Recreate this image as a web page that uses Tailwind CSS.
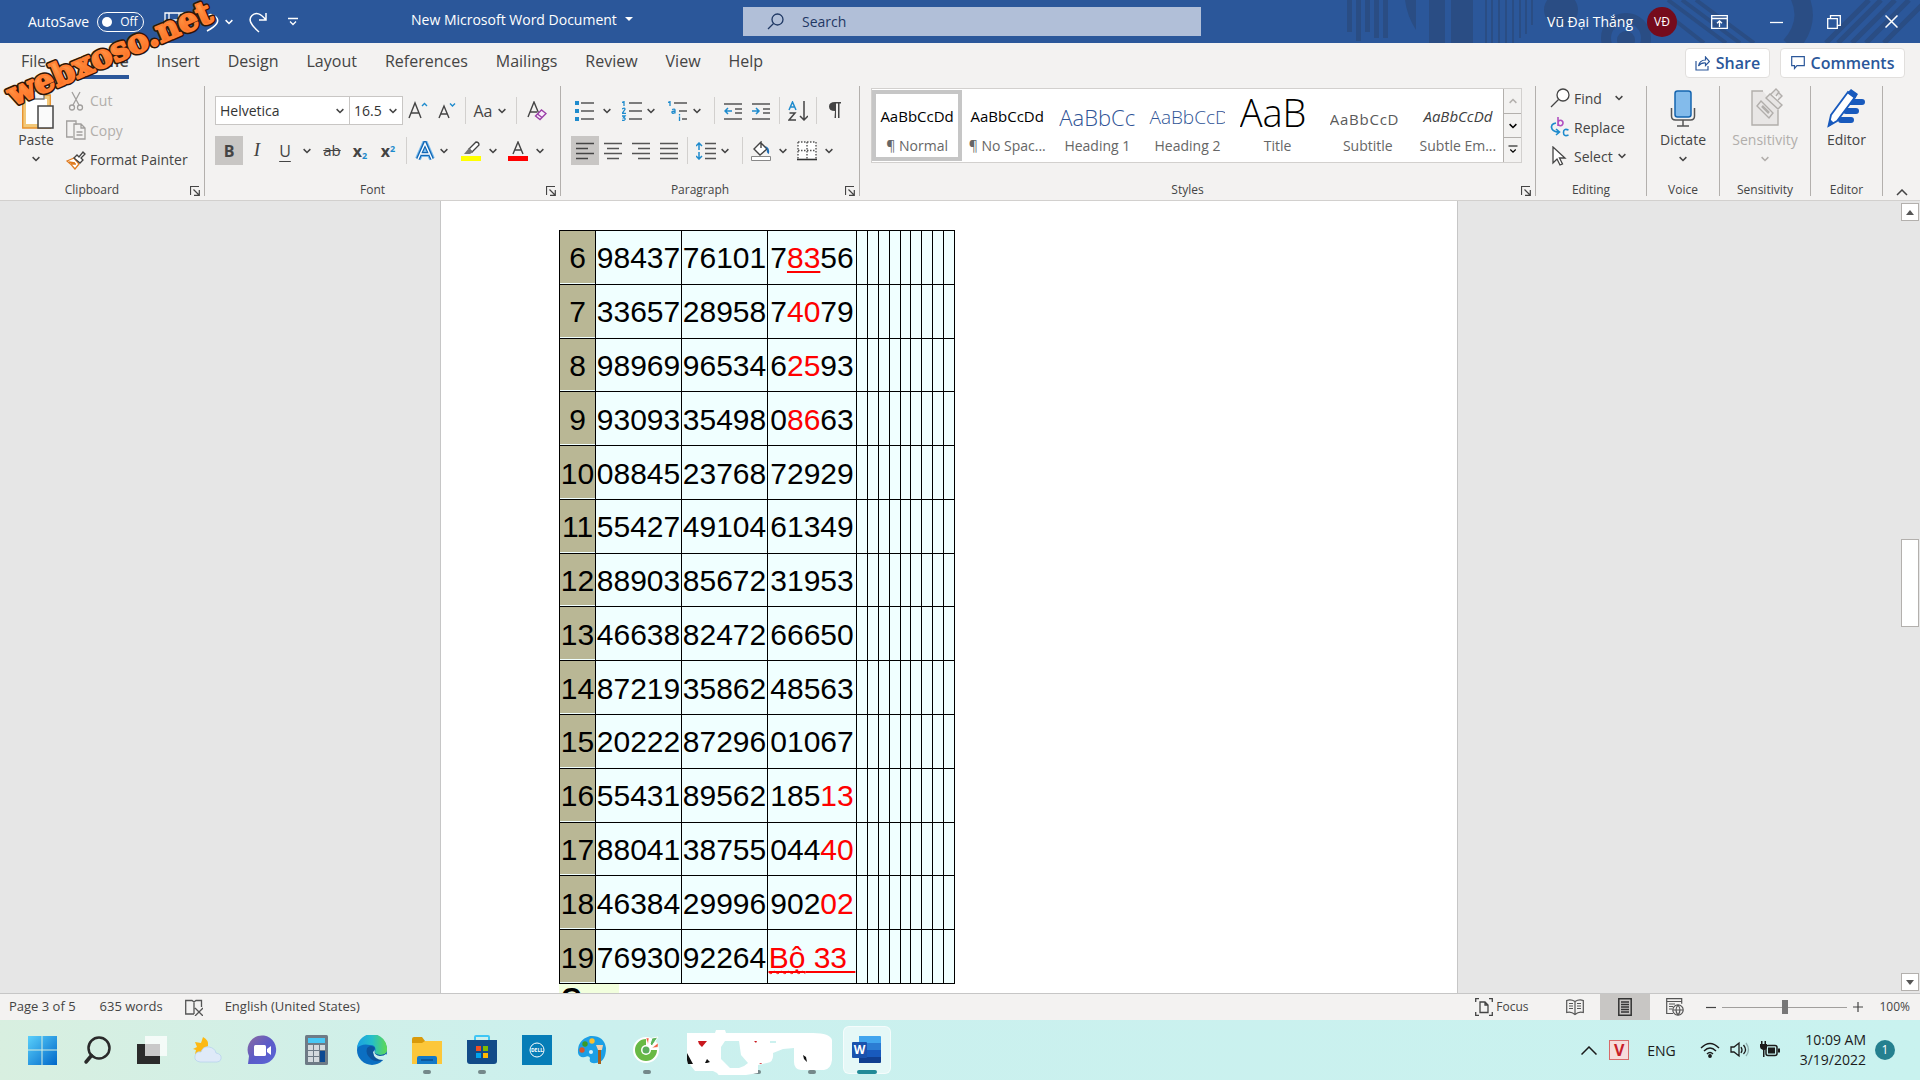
<!DOCTYPE html>
<html lang="en">
<head>
    <meta charset="UTF-8">
    <meta name="viewport" content="width=device-width, initial-scale=1.0">
    <title>New Microsoft Word Document</title>
    <script src="https://cdn.jsdelivr.net/npm/@tailwindcss/browser@4"></script>
</head>
<body class="h-screen flex flex-col overflow-hidden bg-[#f3f2f1] text-[#444444] font-['Open_Sans','Noto_Sans',sans-serif]">

    <!-- shared symbols -->
    <svg class="hidden">
        <symbol id="chev" viewBox="0 0 8 8"><path d="M1.300 2.500L4 5.200l2.700-2.700" fill="none" stroke="currentColor" stroke-width="1.200"/></symbol>
        <symbol id="launch" viewBox="0 0 10 10"><path d="M.5 9V.5H9M3.500 3.500l5 5M9.300 4v5.300H4" fill="none" stroke="currentColor" stroke-width="1.200"/></symbol>
    </svg>

    <!-- title bar -->
    <header class="relative flex items-center h-[43px] bg-[#2b579a] text-white text-[14px]">
        <svg class="absolute right-0 top-0" width="620" height="43" viewBox="1300 0 620 43" fill="#2a4d84" stroke="#2a4d84" stroke-width="0">
            <path d="M1347 0h5v32h-5zM1356 0h5v41h-5zM1365 0h5v32h-5zM1374 0h5v38h-5zM1383 0h5v38h-5zM1405 0h11v30q-9-14-11-30zM1429 0h16v43h-16zM1451 0h22v43h-22zM1485 0h2v43h-2zM1491 0h2v43h-2zM1498 0h2v43h-2zM1505 0h2v43h-2zM1512 0h2v43h-2zM1519 0h2v38h-2zM1525 0h2v34h-2zM1531 0h2v25h-2z"/>
            <circle cx="1561" cy="10" r="17"/>
            <circle cx="1626" cy="38" r="20" fill="none" stroke-width="10"/>
            <circle cx="1626" cy="40" r="9"/>
            <path d="M1668 0l58 43M1682 0l58 43M1696 0l58 43M1672 18l32 25" stroke-width="4" fill="none"/>
            <path d="M1796-10q18 30-6 56" stroke-width="18" fill="none"/>
            <path d="M1826 43l43-43M1838 43l43-43M1852 43l43-43M1866 43l43-43M1884 43l43-43" stroke-width="5" fill="none"/>
        </svg>
        <label class="relative flex items-center gap-2 pl-7 w-[164px]">
            <span>AutoSave</span>
            <input type="checkbox" class="sr-only">
            <span class="flex items-center gap-2 h-5 w-[47px] rounded-full border border-white pl-1 text-[12px]"><i class="size-[10px] rounded-full bg-white"></i>Off</span>
        </label>
        <div class="relative flex items-center">
            <button aria-label="Save" class="w-9"><svg width="20" height="20" fill="none" stroke="white" stroke-width="1.300"><path d="M1 1h18v18H4l-3-3zM5 1v7h10V1M6 19v-6h8v6"/></svg></button>
            <button aria-label="Undo" class="w-6"><svg width="20" height="20" fill="none" stroke="white" stroke-width="1.500"><path d="M2 1v7h7M2 8q8-9 14-3t-9 14"/></svg></button>
            <button aria-label="Undo list" class="w-6"><svg class="size-[10px]"><use href="#chev"/></svg></button>
            <button aria-label="Redo" class="w-9"><svg width="20" height="22" fill="none" stroke="white" stroke-width="1.500"><path d="M18 2v7h-7M18 9Q10-1 4 4.500T11 21"/></svg></button>
            <button aria-label="Customize Quick Access Toolbar" class="w-8 pl-1"><svg width="10" height="10" fill="none" stroke="white" stroke-width="1.300"><path d="M0 1.500h10M2 4.500l3 3 3-3"/></svg></button>
        </div>
        <button class="relative flex items-center gap-2 ml-[95px] mb-1"><span>New Microsoft Word Document</span><svg width="8" height="5" fill="white"><path d="M0 0h8l-4 4z"/></svg></button>
        <label class="absolute left-[743px] top-[7px] flex items-center w-[458px] h-[29px] bg-[#b1bfd8] text-[#1f3864] pl-6 gap-[18px]">
            <svg width="17" height="17" fill="none" stroke="#1f3864" stroke-width="1.300"><circle cx="10.500" cy="6.500" r="5.500"/><path d="M6.500 10.500L1 16"/></svg>
            <input type="text" aria-label="Search" placeholder="Search" class="flex-1 bg-transparent outline-none placeholder:text-[#1f3864]">
        </label>
        <div class="relative ml-auto flex items-center">
            <span class="mr-[14px]">Vũ Đại Thắng</span>
            <span class="size-[30px] rounded-full bg-[#750b1c] text-[12px] flex items-center justify-center">VĐ</span>
            <button aria-label="Ribbon display" class="ml-[34px] w-[17px]"><svg width="17" height="14" fill="none" stroke="white" stroke-width="1.300"><path d="M.7.700h15.600v12.600H.7zM.7 3.500h15.600M8.500 12V6M6 8.300L8.500 6 11 8.300"/></svg></button>
            <button aria-label="Minimize" class="ml-[42px] w-[13px]"><svg width="13" height="14"><path d="M0 7.500h13" stroke="white" stroke-width="1.300"/></svg></button>
            <button aria-label="Restore" class="ml-[44px] w-[14px]"><svg width="14" height="14" fill="none" stroke="white" stroke-width="1.300"><path d="M.7 3.700h9.600v9.600H.7zM3.500 3.500V.7h9.800v9.600h-3"/></svg></button>
            <button aria-label="Close" class="ml-[44px] mr-[22px] w-[13px]"><svg width="13" height="13" stroke="white" stroke-width="1.500"><path d="M.5.500l12 12M12.500.500l-12 12"/></svg></button>
        </div>
    </header>

    <!-- tabs -->
    <nav class="flex items-center pt-1 pb-px pl-[21px] text-[16px]">
        <div class="flex gap-7">
            <a href="#" class="flex items-center h-8 border-b-4 border-transparent pr-2">File</a>
            <a href="#" class="flex items-center h-8 border-b-4 border-[#2b579a] font-semibold">Home</a>
            <a href="#" class="flex items-center h-8 border-b-4 border-transparent">Insert</a>
            <a href="#" class="flex items-center h-8 border-b-4 border-transparent">Design</a>
            <a href="#" class="flex items-center h-8 border-b-4 border-transparent">Layout</a>
            <a href="#" class="flex items-center h-8 border-b-4 border-transparent">References</a>
            <a href="#" class="flex items-center h-8 border-b-4 border-transparent">Mailings</a>
            <a href="#" class="flex items-center h-8 border-b-4 border-transparent">Review</a>
            <a href="#" class="flex items-center h-8 border-b-4 border-transparent">View</a>
            <a href="#" class="flex items-center h-8 border-b-4 border-transparent">Help</a>
        </div>
        <div class="ml-auto mr-[15px] flex gap-[10px] font-semibold text-[#2b579a]">
            <button class="flex items-center justify-center gap-1.5 w-[85px] h-[30px] rounded-sm bg-white border border-[#e1dfdd]">
                <svg width="15" height="15" fill="none" stroke="#2b579a" stroke-width="1.200"><path d="M1 5v9h12v-4M3.500 10q1-6 7-6V1l4 4.500-4 4V7Q6 6.500 3.500 10z"/></svg>Share</button>
            <button class="flex items-center justify-center gap-1.5 w-[125px] h-[30px] rounded-sm bg-white border border-[#e1dfdd]">
                <svg width="14" height="14" fill="none" stroke="#2b579a" stroke-width="1.200"><path d="M.7.700h12.600v9H6L3.500 12.500V9.700H.7z"/></svg>Comments</button>
        </div>
    </nav>

    <!-- ribbon -->
    <div class="flex pt-1.5 pb-1 border-b border-[#d2d0ce] text-[14px]">
        <section class="w-[205px] h-[110px] flex flex-col justify-between border-r border-[#b3b0ad]">
            <div class="flex pl-3">
                <button class="flex flex-col items-center w-12 mr-1.5">
                    <svg width="36" height="44" fill="none"><path d="M6 11h25v29H6z" fill="#fff" stroke="#f2c879" stroke-width="4"/><path d="M4.700 9h27.600v33H4.700z" stroke="#e8912d" stroke-width="1.300"/><path d="M11 13V8h4q3-7 7 0h4v5z" fill="#f3f2f1" stroke="#777" stroke-width="1.300"/><path d="M20 20h15v22H20z" fill="#fafafa" stroke="#444" stroke-width="1.500"/></svg>
                    <span class="leading-5">Paste</span>
                    <svg class="size-[10px] mt-1"><use href="#chev"/></svg>
                </button>
                <div class="flex flex-col">
                    <button class="flex items-center gap-1 h-[29px] text-[#b1aeab]"><svg width="20" height="20" fill="none" stroke="#a19f9d" stroke-width="1.300"><path d="M6 1l7 13M14 1L7 14"/><circle cx="6" cy="16.500" r="2.500"/><circle cx="14" cy="16.500" r="2.500"/></svg>Cut</button>
                    <button class="flex items-center gap-1 h-[30px] text-[#b1aeab]"><svg width="20" height="20" fill="none" stroke="#a19f9d" stroke-width="1.300"><path d="M7 17H.7V1H10v4M8 4h7l4 4v11H8zM15 4v4h4M10.500 12h6M10.500 15h6"/></svg>Copy</button>
                    <button class="flex items-center gap-1 h-[29px]"><svg width="20" height="20" fill="none" stroke-width="1.300"><path d="M1 11l7-3 5 6-4 5q-4-5-8-8z" fill="#fff" stroke="#e07b1f"/><path d="M3 12l6 1M5 14l5 0" stroke="#e07b1f"/><path d="M8 8l3-3 2 2 4-5 2 2-4 4 2 2-3 3z" fill="#fff" stroke="#444"/></svg>Format Painter</button>
                </div>
            </div>
            <div class="flex items-end pr-1 text-[12px] leading-3"><span class="flex-1 pr-1.5 text-center">Clipboard</span><button aria-label="Clipboard settings"><svg class="size-[10px]"><use href="#launch"/></svg></button></div>
        </section>

        <section class="w-[356px] h-[110px] flex flex-col justify-between border-r border-[#b3b0ad]">
            <div class="pl-[10px] pt-[10px] flex flex-col gap-[11px]">
                <div class="flex items-center h-[29px]">
                    <label class="flex items-center w-[135px] h-[29px] bg-white border border-[#c8c6c4] px-1">
                        <select aria-label="Font" class="flex-1 appearance-none outline-none text-[#333]"><option>Helvetica</option></select><svg class="size-[10px]"><use href="#chev"/></svg>
                    </label>
                    <label class="flex items-center w-[54px] h-[29px] -ml-px bg-white border border-[#c8c6c4] px-1">
                        <select aria-label="Font size" class="flex-1 w-0 appearance-none outline-none text-[#333]"><option>16.5</option></select><svg class="size-[10px]"><use href="#chev"/></svg>
                    </label>
                    <button aria-label="Grow font" class="w-[30px] flex justify-center"><svg width="20" height="20" fill="none" stroke="#444" stroke-width="1.400"><path d="M1 17L7 2l6 15M3 12h8"/><path d="M14 5l2.500-2.500L19 5" stroke="#1e8bcd"/></svg></button>
                    <button aria-label="Shrink font" class="w-7 flex justify-center"><svg width="18" height="20" fill="none" stroke="#444" stroke-width="1.400"><path d="M1 17L6 5l5 12M3 13h6"/><path d="M12 2.500L14.500 5 17 2.500" stroke="#1e8bcd"/></svg></button>
                    <i class="w-px h-[27px] mx-1 bg-[#d2d0ce]"></i>
                    <button aria-label="Change case" class="w-[40px] flex items-center justify-center gap-1 text-[16px]">Aa<svg class="size-[10px]"><use href="#chev"/></svg></button>
                    <i class="w-px h-[27px] mx-1.5 bg-[#d2d0ce]"></i>
                    <button aria-label="Clear formatting" class="w-7 flex justify-center"><svg width="20" height="20" fill="none" stroke="#444" stroke-width="1.400"><path d="M1 16L7 1l5 12M3 11h7"/><path d="M8.500 15l6-6 4.500 3.500-6 6z" stroke="#9b3fa8" fill="#f9eefb"/><path d="M10.500 13l4.500 3.500" stroke="#9b3fa8"/></svg></button>
                </div>
                <div class="flex items-center h-[29px]">
                    <button class="w-7 h-[29px] bg-[#c8c6c4] font-bold text-[16px]">B</button>
                    <button class="w-7 italic text-[19px] font-['Liberation_Serif',serif]">I</button>
                    <button class="w-7 text-[16px] underline underline-offset-4">U</button>
                    <button aria-label="Underline style" class="w-4 mr-[3px] flex justify-center"><svg class="size-[10px]"><use href="#chev"/></svg></button>
                    <button class="w-7 text-[15px] line-through">ab</button>
                    <button aria-label="Subscript" class="w-7 font-bold text-[16px]">x<sub class="text-[9px] text-[#1e8bcd]">2</sub></button>
                    <button aria-label="Superscript" class="w-7 font-bold text-[16px]">x<sup class="text-[9px] text-[#1e8bcd]">2</sup></button>
                    <i class="w-px h-[27px] mx-1 bg-[#d2d0ce]"></i>
                    <button aria-label="Text effects" class="w-7 flex justify-center"><svg width="20" height="20" fill="none"><path d="M3 18L10 2l7 16M6 13h8" stroke="#7cbcec" stroke-width="6"/><path d="M3 18L10 2l7 16M6 13h8" stroke="#1267b5" stroke-width="4"/><path d="M3 18L10 2.500l7 15.500M6 13h8" stroke="#fff" stroke-width="1.400"/></svg></button>
                    <button aria-label="Text effects list" class="w-4 mr-0.5 flex"><svg class="size-[10px]"><use href="#chev"/></svg></button>
                    <button aria-label="Highlight" class="w-7 flex justify-center"><svg width="20" height="20" fill="none"><path d="M8 8l7-7q3 0 3 3l-7 7z" fill="#fff" stroke="#444" stroke-width="1.300"/><path d="M8 7l4 4-3 2H3z" fill="#777"/><path d="M0 15h20v5H0z" fill="#ff0"/></svg></button>
                    <button aria-label="Highlight list" class="w-4 mr-[3px] flex justify-center"><svg class="size-[10px]"><use href="#chev"/></svg></button>
                    <button aria-label="Font color" class="w-7 flex justify-center"><svg width="20" height="20" fill="none"><path d="M5 13l5-12 5 12M7 9h6" stroke="#444" stroke-width="1.400"/><path d="M0 15h20v5H0z" fill="red"/></svg></button>
                    <button aria-label="Font color list" class="w-4 flex justify-center"><svg class="size-[10px]"><use href="#chev"/></svg></button>
                </div>
            </div>
            <div class="flex items-end pr-1 text-[12px] leading-3"><span class="flex-1 pr-1.5 text-center">Font</span><button aria-label="Font settings"><svg class="size-[10px]"><use href="#launch"/></svg></button></div>
        </section>

        <section class="w-[299px] h-[110px] flex flex-col justify-between border-r border-[#b3b0ad]">
            <div class="pl-[10px] pt-[10px] flex flex-col gap-[11px]">
                <div class="flex items-center h-[29px]">
                    <button aria-label="Bullets" class="w-7 flex justify-center"><svg width="20" height="20"><path d="M0 0h4v4H0zM0 8h4v4H0zM0 16h4v4H0z" fill="#1e8bcd"/><path d="M6 2h13M6 10h13M6 18h13" stroke="#555" stroke-width="1.500"/></svg></button>
                    <button aria-label="Bullets list" class="w-4 mr-[3px] flex justify-center"><svg class="size-[10px]"><use href="#chev"/></svg></button>
                    <button aria-label="Numbering" class="w-7 flex justify-center"><svg width="20" height="20" fill="none" stroke="#1e8bcd" stroke-width="1.300"><path d="M0 1.500L2 .7V5M0 8q3-2 3 .3L.3 12.300H4M0 15h3l-1.500 1.800q2 0 1.500 1.700-1 1.500-3 .5"/><path d="M7 2h13M7 10h13M7 18h13" stroke="#555" stroke-width="1.500"/></svg></button>
                    <button aria-label="Numbering list" class="w-4 mr-0.5 flex"><svg class="size-[10px]"><use href="#chev"/></svg></button>
                    <button aria-label="Multilevel list" class="w-7 flex justify-center"><svg width="20" height="20" fill="none" stroke="#1e8bcd" stroke-width="1.300"><path d="M0 1.500L2 .7V5M4 8.500q3-1 3 .5v3.500M7 10q-3.500 0-3 1.500t3 0M11.500 13v1.500M11.500 15.500V20"/><path d="M6 2h13M11 10h8M14 18h5" stroke="#555" stroke-width="1.500"/></svg></button>
                    <button aria-label="Multilevel list choices" class="w-4 mr-0.5 flex"><svg class="size-[10px]"><use href="#chev"/></svg></button>
                    <i class="w-px h-[27px] mx-1 bg-[#d2d0ce]"></i>
                    <button aria-label="Decrease indent" class="w-7 flex justify-center"><svg width="18" height="18" fill="none" stroke="#555" stroke-width="1.500"><path d="M0 2h18M11 7h7M11 11h7M0 17h18"/><path d="M8 9H1M4 6L1 9l3 3" stroke="#1e8bcd"/></svg></button>
                    <button aria-label="Increase indent" class="w-7 flex justify-center"><svg width="18" height="18" fill="none" stroke="#555" stroke-width="1.500"><path d="M0 2h18M11 7h7M11 11h7M0 17h18"/><path d="M0 9h7M4 6l3 3-3 3" stroke="#1e8bcd"/></svg></button>
                    <i class="w-px h-[27px] mx-1 bg-[#d2d0ce]"></i>
                    <button aria-label="Sort" class="w-7 flex justify-center"><svg width="20" height="20" fill="none" stroke-width="1.500"><path d="M1 9l3.500-8L8 9M2 6h5" stroke="#1e8bcd"/><path d="M1.500 12H7l-6 7h7M16 0v19M12 15l4 4 4-4" stroke="#444"/></svg></button>
                    <i class="w-px h-[27px] mx-1 bg-[#d2d0ce]"></i>
                    <button aria-label="Show marks" class="w-7 flex justify-center"><svg width="14" height="17"><path d="M7 9Q1 9 1 4.500T7 0h6v1.500h-1.500V16H10V1.500H8V16H6.500z" fill="#444"/></svg></button>
                </div>
                <div class="flex items-center h-[29px]">
                    <button aria-label="Align left" class="w-7 h-[29px] bg-[#c8c6c4] flex items-center justify-center"><svg width="18" height="18" stroke="#444" stroke-width="1.500"><path d="M0 1.500h18M0 6.500h12M0 11.500h18M0 16.500h12"/></svg></button>
                    <button aria-label="Center" class="w-7 flex justify-center"><svg width="18" height="18" stroke="#555" stroke-width="1.500"><path d="M0 1.500h18M3 6.500h12M0 11.500h18M3 16.500h12"/></svg></button>
                    <button aria-label="Align right" class="w-7 flex justify-center"><svg width="18" height="18" stroke="#555" stroke-width="1.500"><path d="M0 1.500h18M6 6.500h12M0 11.500h18M6 16.500h12"/></svg></button>
                    <button aria-label="Justify" class="w-7 flex justify-center"><svg width="18" height="18" stroke="#555" stroke-width="1.500"><path d="M0 1.500h18M0 6.500h18M0 11.500h18M0 16.500h18"/></svg></button>
                    <i class="w-px h-[27px] mx-1 bg-[#d2d0ce]"></i>
                    <button aria-label="Line spacing" class="w-7 flex justify-center"><svg width="20" height="18" fill="none" stroke="#555" stroke-width="1.500"><path d="M9 1.500h11M9 6.500h11M9 11.500h11M9 16.500h11"/><path d="M3 8V1M0 4l3-3 3 3M3 10v7M0 14l3 3 3-3" stroke="#1e8bcd"/></svg></button>
                    <button aria-label="Line spacing list" class="w-4 mr-0.5 flex"><svg class="size-[10px]"><use href="#chev"/></svg></button>
                    <i class="w-px h-[27px] mx-1 bg-[#d2d0ce]"></i>
                    <button aria-label="Shading" class="w-7 flex justify-center"><svg width="20" height="20" fill="none"><path d="M10 2l6 6-7 6-6-6 7-7v6" fill="#fff" stroke="#444" stroke-width="1.400"/><path d="M14 5q5 1 4 8-3-1-2-5z" fill="#1e6fb8"/><path d="M.5 15.500h19v4H.5z" fill="#fff" stroke="#888"/></svg></button>
                    <button aria-label="Shading list" class="w-4 mr-0.5 flex justify-center"><svg class="size-[10px]"><use href="#chev"/></svg></button>
                    <button aria-label="Borders" class="w-7 flex justify-center"><svg width="20" height="20" fill="none"><path d="M1 1h18v17H1z" fill="#fff"/><path d="M1 1h18v17M1 1v17M10 1v17M1 9.500h18" stroke="#555" stroke-width="1.400" stroke-dasharray="1.500 1.500"/><path d="M0 18.500h20" stroke="#333" stroke-width="1.600"/></svg></button>
                    <button aria-label="Borders list" class="w-4 flex justify-center"><svg class="size-[10px]"><use href="#chev"/></svg></button>
                </div>
            </div>
            <div class="flex items-end pr-1 text-[12px] leading-3"><span class="flex-1 pr-1.5 text-center">Paragraph</span><button aria-label="Paragraph settings"><svg class="size-[10px]"><use href="#launch"/></svg></button></div>
        </section>

        <section class="flex-1 h-[110px] flex flex-col justify-between border-r border-[#b3b0ad]">
            <div class="ml-[11px] mr-[13px] mt-0.5 flex h-[75px] bg-white border border-[#d2d0ce]">
                <div class="flex-1 flex text-[#666] overflow-hidden">
                    <button class="flex-1 flex flex-col justify-end border-4 border-[#c6c6c6] my-px overflow-hidden"><span class="w-full h-11 leading-[50px] text-[15px] text-black whitespace-nowrap">AaBbCcDd</span><span class="w-full leading-[22px]">¶ Normal</span></button>
                    <button class="flex-1 flex flex-col justify-end border-4 border-transparent my-px overflow-hidden"><span class="w-full h-11 leading-[50px] text-[15px] text-black whitespace-nowrap">AaBbCcDd</span><span class="w-full leading-[22px]">¶ No Spac...</span></button>
                    <button class="flex-1 flex flex-col justify-end border-4 border-transparent my-px overflow-hidden"><span class="w-[76px] h-11 leading-[46px] text-[22px] font-light text-[#2f5496] whitespace-nowrap overflow-hidden text-left mx-auto">AaBbCc</span><span class="w-full leading-[22px]">Heading 1</span></button>
                    <button class="flex-1 flex flex-col justify-end border-4 border-transparent my-px overflow-hidden"><span class="w-[76px] h-11 leading-[46px] text-[19px] font-light text-[#2f5496] whitespace-nowrap overflow-hidden text-left mx-auto">AaBbCcD</span><span class="w-full leading-[22px]">Heading 2</span></button>
                    <button class="flex-1 flex flex-col justify-end border-4 border-transparent my-px overflow-hidden"><span class="w-[76px] h-11 leading-9 text-[38px] font-light text-black whitespace-nowrap overflow-hidden text-left mx-auto">AaB</span><span class="w-full leading-[22px]">Title</span></button>
                    <button class="flex-1 flex flex-col justify-end border-4 border-transparent my-px overflow-hidden"><span class="w-[76px] h-11 leading-[50px] text-[15px] text-[#5a5a5a] tracking-wider whitespace-nowrap overflow-hidden text-left mx-auto">AaBbCcD</span><span class="w-full leading-[22px]">Subtitle</span></button>
                    <button class="flex-1 flex flex-col justify-end border-4 border-transparent my-px overflow-hidden"><span class="w-full h-11 leading-[50px] text-[15px] italic text-[#404040] whitespace-nowrap">AaBbCcDd</span><span class="w-full leading-[22px] whitespace-nowrap">Subtle Em...</span></button>
                </div>
                <div class="w-[18px] flex flex-col border-l border-[#b3b0ad] bg-[#f3f2f1] divide-y divide-[#b3b0ad]">
                    <button aria-label="Previous styles" class="flex-1 flex items-center justify-center text-[#b3b0ad]"><svg class="size-[10px] rotate-180"><use href="#chev"/></svg></button>
                    <button aria-label="Next styles" class="flex-1 flex items-center justify-center text-black"><svg class="size-[10px]"><use href="#chev"/></svg></button>
                    <button aria-label="More styles" class="flex-1 flex items-center justify-center text-black"><svg width="10" height="10" fill="none" stroke="currentColor" stroke-width="1.200"><path d="M.5 1h9M2.300 4.500L5 7.200l2.700-2.700"/></svg></button>
                </div>
            </div>
            <div class="flex items-end pr-1 text-[12px] leading-3"><span class="flex-1 pr-1.5 text-center">Styles</span><button aria-label="Styles settings"><svg class="size-[10px]"><use href="#launch"/></svg></button></div>
        </section>

        <section class="w-[111px] h-[110px] flex flex-col justify-between border-r border-[#b3b0ad]">
            <div class="flex flex-col pl-[14px]">
                <button class="flex items-center gap-1 h-6"><svg width="20" height="20" fill="none" stroke="#444" stroke-width="1.300"><circle cx="13" cy="7" r="6" fill="#fff"/><path d="M8.500 11.500L1 19"/></svg>Find<svg class="size-[10px] ml-2"><use href="#chev"/></svg></button>
                <button class="flex items-center gap-1 h-[34px]"><svg width="20" height="20" fill="none" stroke-width="1.600"><path d="M8 0v9M8 6a2.500 2.700 0 1 1 5 0 2.500 2.700 0 1 1-5 0" stroke="#b14fc0"/><path d="M18.500 13q-5-2-5 2.500t5 2.500M6 6q-6 1-4 6 2 3 7 3M6 12l3.500 3L6 18" stroke="#1e8bcd"/></svg>Replace</button>
                <button class="flex items-center gap-1 h-6"><svg width="20" height="20" fill="#fff" stroke="#444" stroke-width="1.300"><path d="M3 1v16l4-4 3 6 2.500-1-3-6H15z"/></svg>Select<svg class="size-[10px]"><use href="#chev"/></svg></button>
            </div>
            <div class="text-[12px] leading-3 text-center">Editing</div>
        </section>
        <section class="w-[73px] h-[110px] flex flex-col justify-between border-r border-[#b3b0ad]">
            <button class="flex flex-col items-center">
                <svg width="28" height="44" fill="none"><path d="M2.500 22v8q0 4 4 4h15q4 0 4-4v-8M14 34v6M8 40h12" stroke="#555" stroke-width="1.500"/><rect x="6" y="5" width="16" height="26" rx="2.500" fill="#83bbeb" stroke="#1565b0" stroke-width="1.500"/></svg>
                <span class="leading-5">Dictate</span><svg class="size-[10px] mt-1"><use href="#chev"/></svg>
            </button>
            <div class="text-[12px] leading-3 text-center">Voice</div>
        </section>
        <section class="w-[91px] h-[110px] flex flex-col justify-between border-r border-[#b3b0ad]">
            <button class="flex flex-col items-center text-[#b1aeab]">
                <svg width="36" height="44" fill="#e8e6e5" stroke="#b1aeab" stroke-width="1.400"><path d="M16 5H5v34h26V24"/><path d="M14 15l12 12-4 5L10 20z"/><path d="M15 20l7 7" stroke-width="2.500"/><path d="M19 12l4-4 12 11-4 4zM24 8l5-5 3 3-3 4M31 14l4-4-4-4"/></svg>
                <span class="leading-5">Sensitivity</span><svg class="size-[10px] mt-1"><use href="#chev"/></svg>
            </button>
            <div class="text-[12px] leading-3 text-center">Sensitivity</div>
        </section>
        <section class="w-[72px] h-[110px] flex flex-col justify-between border-r border-[#b3b0ad]">
            <button class="flex flex-col items-center">
                <svg width="40" height="44"><path d="M22 16h13M19 25h10M14 34h10" stroke="#185abd" stroke-width="6" stroke-linecap="round"/><path d="M1.500 40L4 29 21 6l7 5-18 24z" fill="#fff" stroke="#185abd" stroke-width="1.800"/><path d="M20 7l4-4 7 5-3 5zM1 41l2-8 4 4z" fill="#185abd"/></svg>
                <span class="leading-5">Editor</span>
            </button>
            <div class="text-[12px] leading-3 text-center">Editor</div>
        </section>
        <div class="w-[37px] flex items-end justify-center"><button aria-label="Collapse ribbon"><svg width="12" height="7" fill="none" stroke="#444" stroke-width="1.500"><path d="M1 6l5-5 5 5"/></svg></button></div>
    </div>

    <!-- document -->
    <main class="flex-1 min-h-0 flex bg-[#e6e6e6]">
        <div class="flex-1 overflow-hidden">
            <article class="w-[1018px] h-full mx-auto bg-white border-x border-[#c6c6c6] pl-[118px] pt-[29px] text-black font-['Liberation_Sans',Arial,sans-serif]">
                <table class="table-fixed border-collapse w-[396px] h-[754px] text-[30px] leading-8 text-center bg-[#f0ffff]">
                    <colgroup>
                        <col class="w-9"><col class="w-[86px]"><col class="w-[86px]"><col class="w-[89px]">
                        <col><col><col><col><col><col><col><col><col>
                    </colgroup>
                    <tbody id="draws"></tbody>
                </table>
                <p class="w-[60px] bg-[#f2ffdd] pl-0.5 text-[28px] leading-7 font-bold">C</p>
            </article>
        </div>
        <div class="w-[22px] pl-0.5 py-0.5 flex flex-col items-center">
            <button aria-label="Scroll up" class="w-[18px] h-[18px] bg-white border border-[#b3b0ad] flex items-center justify-center"><svg width="8" height="5" fill="#555"><path d="M0 5l4-5 4 5z"/></svg></button>
            <div class="flex-[318]"></div>
            <div class="w-[18px] h-[88px] bg-white border border-[#b3b0ad]"></div>
            <div class="flex-[345]"></div>
            <button aria-label="Scroll down" class="w-[18px] h-[18px] bg-white border border-[#b3b0ad] flex items-center justify-center"><svg width="8" height="5" fill="#555"><path d="M0 0l4 5 4-5z"/></svg></button>
        </div>
    </main>

    <!-- status bar -->
    <footer class="flex items-center h-[27px] border-t border-[#c6c6c6] text-[13px]">
        <span class="pl-[9px]">Page 3 of 5</span>
        <span class="ml-6">635 words</span>
        <button aria-label="Proofing errors" class="ml-[22px]"><svg width="18" height="17" fill="none" stroke="#555" stroke-width="1.300"><path d="M9 15H.7V1.500H7L9 3l2-1.500h5.500V8M9 3v12M10 9l8 8M18 9l-8 8"/></svg></button>
        <span class="ml-[22px]">English (United States)</span>
        <div class="ml-auto flex items-center h-full">
            <button class="flex items-center gap-[3px] mr-[22px]"><svg width="18" height="18" fill="none" stroke="#444" stroke-width="1.300"><path d="M4 .7H.7V4M14 .7h3.300V4M4 17.300H.7V14M14 17.300h3.300V14M5 4h5l3 3v7.500H5zM10 4v3h3"/></svg><span class="text-[12px]">Focus</span></button>
            <button aria-label="Read mode" class="w-[50px] flex justify-center"><svg width="18" height="17" fill="none" stroke="#555" stroke-width="1.200"><path d="M9 2.500Q5 0 .7 1.500v12Q5 12 9 15.500q4-3.500 8.300-2v-12Q13 0 9 2.500zM9 2.500v13M3 4.500h4M3 7h4M3 9.500h4M11 4.500h4M11 7h4M11 9.500h4"/></svg></button>
            <button aria-label="Print layout" class="w-[50px] h-full bg-[#c8c6c4] flex items-center justify-center"><svg width="14" height="18" fill="none" stroke="#333" stroke-width="1.500"><path d="M.8.800h12.400v16.400H.8zM3 4h8M3 6.500h8M3 9h8M3 11.500h8M3 14h8"/></svg></button>
            <button aria-label="Web layout" class="w-[50px] flex justify-center"><svg width="18" height="18" fill="none" stroke="#555" stroke-width="1.200"><path d="M7 15.500H.7V.7h15v5M.7 3.500h15M3 6h6M3 8.500h4M3 11h3"/><circle cx="12" cy="12" r="5.200"/><path d="M7 12h10M12 7q-4 5 0 10M12 7q4 5 0 10"/></svg></button>
            <button aria-label="Zoom out" class="ml-[6px] w-4"><svg width="10" height="10"><path d="M0 5.500h10" stroke="#444" stroke-width="1.200"/></svg></button>
            <input type="range" aria-label="Zoom" min="0" max="200" value="100" class="w-[125px] h-[14px] appearance-none bg-[linear-gradient(#a19f9d,#a19f9d)] bg-[length:100%_1px] bg-center bg-no-repeat [&::-webkit-slider-thumb]:appearance-none [&::-webkit-slider-thumb]:w-1.5 [&::-webkit-slider-thumb]:h-[14px] [&::-webkit-slider-thumb]:bg-[#777]">
            <button aria-label="Zoom in" class="ml-[6px] w-4"><svg width="10" height="10"><path d="M0 5h10M5 0v10" stroke="#444" stroke-width="1.200"/></svg></button>
            <span class="ml-[10px] mr-[10px] text-[12px]">100%</span>
        </div>
    </footer>

    <!-- taskbar -->
    <footer class="flex items-center h-[60px] bg-linear-to-r from-[#d8efe0] via-[#cbf0ee] via-30% to-[#c9f2ef] text-[#1b1b1b]">
        <div class="flex items-center pl-[14px]">
            <button aria-label="Start" class="w-[55px] flex justify-center"><svg width="30" height="30"><defs><linearGradient id="win" x2="1" y2="1"><stop stop-color="#5ad0fb"/><stop offset="1" stop-color="#0067c9"/></linearGradient></defs><path d="M1 1h13.500v13.500H1zM15.500 1H30v13.500H15.500zM1 15.500h13.500V30H1zM15.500 15.500H30V30H15.500z" fill="url(#win)"/></svg></button>
            <button aria-label="Search" class="w-[55px] flex justify-center"><svg width="30" height="30" fill="none" stroke="#2a2a2a" stroke-linecap="round"><circle cx="17" cy="13" r="10.500" stroke-width="2.500"/><path d="M9.500 20.500L4 27" stroke-width="3.500"/></svg></button>
            <button aria-label="Task view" class="w-[55px] flex justify-center"><svg width="30" height="30"><path d="M0 9h23v20H0z" fill="#2b2b2b"/><path d="M8 1h22v20H8z" fill="#fff" opacity=".75"/></svg></button>
            <button aria-label="Weather" class="w-[55px] flex justify-center"><svg width="30" height="30"><path d="M1 14l4-2-2-5 6 1 2-6q6 3 5 9l-9 8-4 0 1-4z" fill="#fdb913"/><path d="M8 27q-6-1-5-6t6-4q2-6 8-5t7 6q6 1 5 6-1 3-4 3z" fill="#dfeaf8" stroke="#b8d3ee" stroke-width=".8"/></svg></button>
            <button aria-label="Chat" class="w-[55px] flex justify-center"><svg width="30" height="30"><defs><linearGradient id="chat" x2="1" y2="1"><stop stop-color="#8e6a9e"/><stop offset=".5" stop-color="#5b5bc8"/><stop offset="1" stop-color="#5a66d8"/></linearGradient></defs><path d="M1 29l1-8A14.300 14.300 0 1 1 14 29z" fill="url(#chat)"/><rect x="7" y="10" width="12" height="11" rx="1.500" fill="#fff"/><path d="M20 14l4-3v9l-4-3z" fill="#fff"/></svg></button>
            <button aria-label="Calculator" class="w-[55px] flex justify-center"><svg width="24" height="30"><rect width="23" height="30" rx="1.500" fill="#6e7b86"/><path d="M3 3h17v5H3z" fill="#47c8f5"/><path d="M3 10h5v5H3zM9 10h5v5H9zM15 10h5v5h-5zM3 16h5v5H3zM9 16h5v5H9zM3 22h5v5H3zM9 22h5v5H9z" fill="#d3dade"/><path d="M15 16h5v11h-5z" fill="#0d4a92"/></svg></button>
            <button aria-label="Edge" class="w-[55px] flex justify-center"><svg width="30" height="30"><defs><linearGradient id="edge"><stop stop-color="#1ba0e4"/><stop offset=".5" stop-color="#25bfc9"/><stop offset="1" stop-color="#5fd951"/></linearGradient></defs><circle cx="15" cy="15" r="15" fill="#0b6fc2"/><path d="M0 13A15 15 0 0 1 30 15q0 5-7 5-6 0-5-3 2-7-5-7Q5 8 0 13z" fill="url(#edge)"/><path d="M10 13q4-4 8 0-2 2-1 4t6 3q5 0 7-3-1 5-4 8-7 3-12-1-6-5-4-11z" fill="#0d549c"/><path d="M18 15q-2 5 5 6 4 0 6-2l2 5-5 1q-9 0-10-8z" fill="#cdf1ee"/></svg></button>
            <button aria-label="File Explorer" class="relative w-[55px] flex justify-center"><svg width="30" height="30"><path d="M0 4q0-2 2-2h8l3 4h15v6H0z" fill="#d99a0b"/><path d="M0 8h10l3-2h17v23H0z" fill="#fcc73a"/><path d="M5 29v-6q0-2 2-2h16q2 0 2 2v6z" fill="#1379c8"/><path d="M9 25h12" stroke="#0b4f90" stroke-width="1.500"/></svg><i class="absolute left-6 top-[35px] w-2 h-1 rounded-full bg-[#74888a]"></i></button>
            <button aria-label="Store" class="relative w-[55px] flex justify-center"><svg width="30" height="30"><path d="M8 6V2q0-1 1-1h12q1 0 1 1v4" fill="none" stroke="#3fc6f5" stroke-width="2"/><path d="M0 5h30v21q0 3-3 3H3q-3 0-3-3z" fill="#124b88"/><path d="M9 11h5v5H9z" fill="#f25022"/><path d="M16 11h5v5h-5z" fill="#7fba00"/><path d="M9 18h5v5H9z" fill="#00a4ef"/><path d="M16 18h5v5h-5z" fill="#ffb900"/></svg><i class="absolute left-6 top-[35px] w-2 h-1 rounded-full bg-[#74888a]"></i></button>
            <button aria-label="Dell" class="w-[55px] flex justify-center"><svg width="30" height="30"><path d="M0 0h30v30H0z" fill="#067db7"/><circle cx="15" cy="15" r="7" fill="none" stroke="#fff"/><text x="15" y="17" font-size="5" font-weight="bold" text-anchor="middle" fill="#fff">DELL</text></svg></button>
            <button aria-label="Paint" class="w-[55px] flex justify-center"><svg width="30" height="30"><path d="M1 18Q0 5 13 1q14-1 16 12 0 14-10 15-8 1-6-5-1-3-5-1-6 1-7-4z" fill="#1c9fe5"/><circle cx="15" cy="6" r="2.700" fill="#fbc02d"/><circle cx="8" cy="9" r="2.700" fill="#3a9a24"/><circle cx="5" cy="15" r="2.700" fill="#d9532c"/><circle cx="14" cy="17" r="2" fill="#d5f1fa"/><path d="M19 10h7l-1 5h-4z" fill="#f1d2b0"/><path d="M21 15h3v14h-3z" fill="#a5601d"/></svg></button>
            <button aria-label="Browser" class="relative w-[55px] flex justify-center"><svg width="30" height="30"><circle cx="14" cy="15" r="13" fill="#fff"/><path d="M14 4a11 11 0 1 0 11 11l-7 0a4 4 0 1 1-4-4z" fill="#68b944"/><circle cx="14" cy="15" r="5" fill="#fff"/><circle cx="14" cy="15" r="3.500" fill="#5bae5b"/><path d="M18 9l2-6 6-1-6 9z" fill="#5bb45b" stroke="#fff"/><path d="M14 3h3l-1 6zM20 13l6-5v4z" fill="#f15a3c" stroke="#fff" stroke-width=".5"/></svg><i class="absolute left-6 top-[35px] w-2 h-1 rounded-full bg-[#74888a]"></i></button>
            <svg width="165" height="50" viewBox="674 1025 165 50">
                <rect x="753" y="1070" width="8" height="4" rx="2" fill="#74888a"/><rect x="808" y="1070" width="8" height="4" rx="2" fill="#74888a"/>
                <path fill-rule="evenodd" fill="#fff" d="M687 1033h28l1-3h9l1 3h87q17 0 19 7v20q-1 9-8 10h-23q-7-1-7-8v-14l-11 1-10 4q1 9-6 10l-9 2v8l-12 2-6 3h-19l-4-5-4-2h-18l-4-5-4-8zM721 1047l4-6h14l2 14 7 8q-4 4-9 5h-9l-5-5-4-4z"/>
                <path d="M687 1053l6 11h-5l-1-4zM705 1063l2-4 3 3-3 1zM803 1055l3 2 1 5-3-3z" fill="#111"/><path d="M698 1041h9l-5 6-3-3zM754 1041h3l-1 2zM759 1063h3l-1 1z" fill="#c9181e"/>
                <path d="M770 1041h6v2h-6z" fill="#ccf1ef"/>
            </svg>
            <button aria-label="Word" class="relative w-[48px] h-[48px] ml-1 rounded-md border border-white/60 bg-white/50 flex items-center justify-center"><svg width="30" height="30"><path d="M7 1h21q1 0 1 1v6H7z" fill="#41a5ee"/><path d="M7 8h22v7H7z" fill="#2b7cd3"/><path d="M7 15h22v7H7z" fill="#185abd"/><path d="M7 22h22v5q0 1-1 1H7z" fill="#103f91"/><rect y="7" width="15" height="16" rx="1" fill="#1a52ad"/><text x="7.500" y="19" font-size="12" font-weight="bold" text-anchor="middle" fill="#fff">W</text></svg><i class="absolute left-[13px] top-[43px] w-5 h-1 rounded-full bg-[#218a97]"></i></button>
        </div>
        <div class="ml-auto flex items-center text-[14px]">
            <button aria-label="Hidden icons" class="mr-3"><svg width="16" height="9" fill="none" stroke="#1b1b1b" stroke-width="1.500"><path d="M.5 8.500L8 1l7.500 7.500"/></svg></button>
            <span class="size-5 mr-[18px] bg-[#f6dcdc] border border-[#d86a6a] text-[#c81e2b] text-[16px] font-bold leading-[18px] text-center">V</span>
            <button class="mr-6">ENG</button>
            <svg class="mr-[10px]" width="20" height="18" fill="none" stroke="#1b1b1b" stroke-width="1.400"><path d="M1 7q9-9 18 0M4 10q6-6 12 0M7 13q3-3 6 0"/><circle cx="10" cy="15" r="1.200" fill="#1b1b1b"/></svg>
            <svg class="mr-[10px]" width="20" height="18" fill="none" stroke="#1b1b1b" stroke-width="1.300"><path d="M1 6v5h3l5 4V2L4 6zM11 6q2 3 0 6M13.500 4q4 5 0 9"/><path d="M16 2q5 7 0 13" stroke="#8fb0b0"/></svg>
            <svg class="mr-5" width="20" height="18"><rect x="6" y="4.500" width="11" height="10" rx="2" fill="none" stroke="#1b1b1b" stroke-width="1.500"/><path d="M8 6.500h7v6H8zM18 7.500h2v4h-2zM0 3h7v4q-1 2-2.500 2V16H3V9Q0 8 0 6zM1 0h1.500v3H1zM4.500 0H6v3H4.500z" fill="#1b1b1b"/></svg>
            <div class="text-right leading-5">10:09 AM<br>3/19/2022</div>
            <span class="size-5 ml-[9px] mr-[25px] rounded-full bg-[#25808f] text-white text-[12px] leading-5 text-center">1</span>
        </div>
    </footer>

    <!-- site stamp laid over the window's corner -->
    <svg class="absolute left-0 top-0 pointer-events-none" width="230" height="120">
        <defs><linearGradient id="stamp" x2="0" y2="1"><stop offset=".3" stop-color="#ff9a4a"/><stop offset="1" stop-color="#fb5f14"/></linearGradient></defs>
        <g transform="translate(13 106) rotate(-23)" font-family="DejaVu Serif" font-weight="bold" font-size="32" stroke-linejoin="round">
            <text stroke="#2b1608" stroke-width="5">webxoso.net</text>
            <text fill="url(#stamp)" stroke="#ff7f32" stroke-width="2">webxoso.net</text>
        </g>
    </svg>

    <script>
        // text inside [ ] is red, inside { } red and underlined
        let rows = [
            ['6', '98437', '76101', '7{83}56'],
            ['7', '33657', '28958', '7[40]79'],
            ['8', '98969', '96534', '6[25]93'],
            ['9', '93093', '35498', '0[86]63'],
            ['10', '08845', '23768', '72929'],
            ['11', '55427', '49104', '61349'],
            ['12', '88903', '85672', '31953'],
            ['13', '46638', '82472', '66650'],
            ['14', '87219', '35862', '48563'],
            ['15', '20222', '87296', '01067'],
            ['16', '55431', '89562', '185[13]'],
            ['17', '88041', '38755', '044[40]'],
            ['18', '46384', '29996', '902[02]'],
            ['19', '76930', '92264', '{<u class="decoration-wavy decoration-1 underline-offset-2">Bộ</u> 33&nbsp;}']
        ];

        let mark = (text) => text
            .replace(/\{(.*)\}/, '<span class="text-[#ff0000] underline decoration-2 underline-offset-3 [text-decoration-skip-ink:none]">$1</span>')
            .replace(/^(\d*)\[(\d+)\]/, '$1<span class="text-[#ff0000]">$2</span>');

        let list = '';
        rows.forEach((row) => {
            list += `<tr><th class="border border-black p-0 pt-0.5 font-normal bg-[#b9b795] shadow-[inset_0_-1px_0_#f0ffff]">${row[0]}</th>`;
            row.slice(1).forEach((cell) => {
                list += `<td class="border border-black p-0 pt-0.5 whitespace-nowrap">${mark(cell)}</td>`;
            });
            list += '<td class="border border-black p-0"></td>'.repeat(9) + '</tr>';
        });
        document.getElementById('draws').innerHTML = list;
    </script>
</body>
</html>
